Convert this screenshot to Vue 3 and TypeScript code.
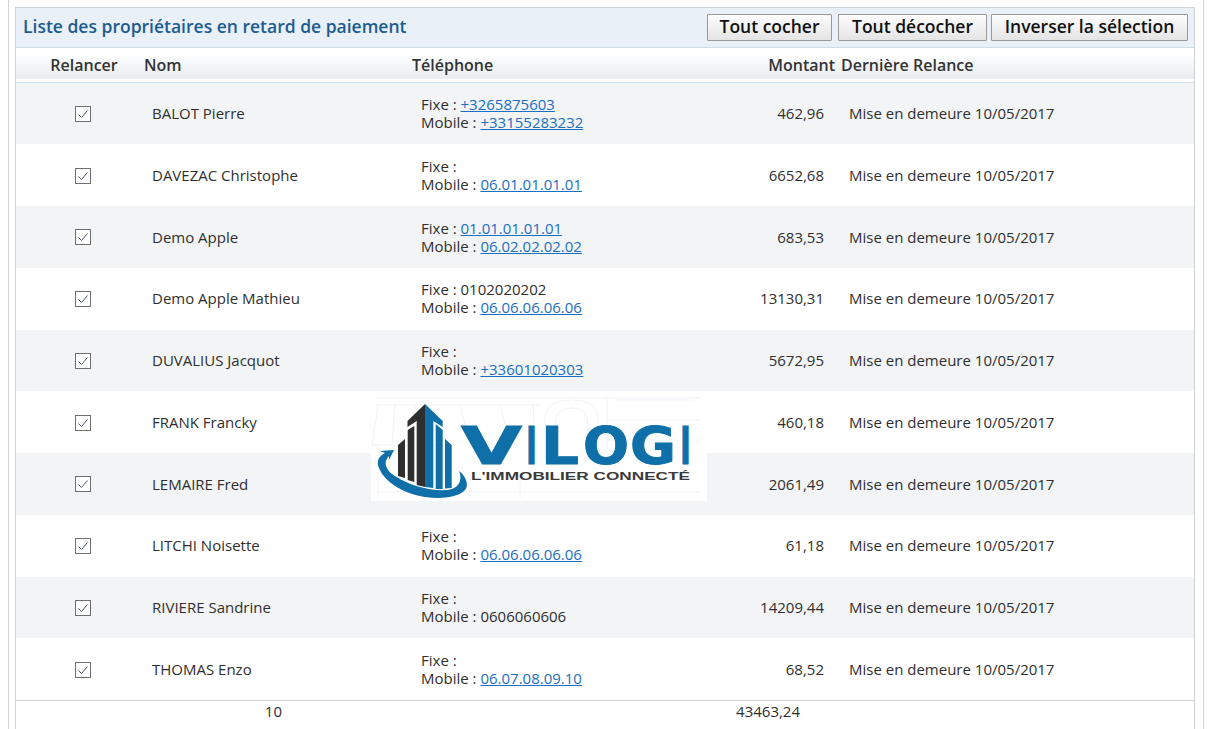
<script setup lang="ts">
interface Row {
  name: string
  fixe: string
  fixeLink: boolean
  mobile: string
  mobileLink: boolean
  amount: string
  covered?: boolean
}
const rows: Row[] = [
  { name: 'BALOT Pierre', fixe: '+3265875603', fixeLink: true, mobile: '+33155283232', mobileLink: true, amount: '462,96' },
  { name: 'DAVEZAC Christophe', fixe: '', fixeLink: false, mobile: '06.01.01.01.01', mobileLink: true, amount: '6652,68' },
  { name: 'Demo Apple', fixe: '01.01.01.01.01', fixeLink: true, mobile: '06.02.02.02.02', mobileLink: true, amount: '683,53' },
  { name: 'Demo Apple Mathieu', fixe: '0102020202', fixeLink: false, mobile: '06.06.06.06.06', mobileLink: true, amount: '13130,31' },
  { name: 'DUVALIUS Jacquot', fixe: '', fixeLink: false, mobile: '+33601020303', mobileLink: true, amount: '5672,95' },
  { name: 'FRANK Francky', fixe: '', fixeLink: false, mobile: '', mobileLink: false, amount: '460,18', covered: true },
  { name: 'LEMAIRE Fred', fixe: '', fixeLink: false, mobile: '', mobileLink: false, amount: '2061,49', covered: true },
  { name: 'LITCHI Noisette', fixe: '', fixeLink: false, mobile: '06.06.06.06.06', mobileLink: true, amount: '61,18' },
  { name: 'RIVIERE Sandrine', fixe: '', fixeLink: false, mobile: '0606060606', mobileLink: false, amount: '14209,44' },
  { name: 'THOMAS Enzo', fixe: '', fixeLink: false, mobile: '06.07.08.09.10', mobileLink: true, amount: '68,52' },
]
const logoLetters = [
  { ch: 'V', x: 461, w: 61 },
  { ch: 'I', x: 526, w: 11 },
  { ch: 'L', x: 541, w: 38 },
  { ch: 'O', x: 583, w: 46 },
  { ch: 'G', x: 630, w: 46 },
  { ch: 'I', x: 680, w: 11 },
]
</script>

<template>
  <div class="page">
    <div class="panel">
      <div class="titlebar">
        <h1 class="title">Liste des propriétaires en retard de paiement</h1>
        <div class="actions">
          <button class="btn btn-a" type="button">Tout cocher</button>
          <button class="btn btn-b" type="button">Tout décocher</button>
          <button class="btn btn-c" type="button">Inverser la sélection</button>
        </div>
      </div>

      <div class="head">
        <span class="h-check">Relancer</span>
        <span class="h-name">Nom</span>
        <span class="h-phone">Téléphone</span>
        <span class="h-amount">Montant</span>
        <span class="h-last">Dernière Relance</span>
      </div>

      <div class="body">
        <div v-for="(r, i) in rows" :key="r.name" class="row" :class="{ odd: i % 2 === 0 }">
          <span class="c-check">
            <svg width="16" height="16" viewBox="0 0 16 16">
              <rect x="0.5" y="0.5" width="15" height="15" fill="#fff" stroke="#6e6e6e" />
              <path d="M3.5 8.5 L6.5 11.5 L12.5 4.5" fill="none" stroke="#4a5a70" stroke-width="1" />
            </svg>
          </span>
          <span class="c-name">{{ r.name }}</span>
          <span class="c-phone">
            <template v-if="!r.covered">
              <span class="line">Fixe : <a v-if="r.fixeLink" href="#">{{ r.fixe }}</a><template v-else>{{ r.fixe }}</template></span>
              <span class="line">Mobile : <a v-if="r.mobileLink" href="#">{{ r.mobile }}</a><template v-else>{{ r.mobile }}</template></span>
            </template>
          </span>
          <span class="c-amount">{{ r.amount }}</span>
          <span class="c-last">Mise en demeure 10/05/2017</span>
        </div>
      </div>

      <div class="foot">
        <span class="f-count">10</span>
        <span class="f-total">43463,24</span>
      </div>

      <svg class="logo" viewBox="371 392 336 109" width="336" height="109">
        <rect x="371" y="392" width="336" height="109" fill="#fff" />
        <g fill="none" stroke="#eff2f7" stroke-width="1">
          <path d="M376 398 H700 M376 405 H540 M378 405 L372 445 M395 405 L392 445 M415 405 L412 445 M460 405 L470 445 M500 405 L510 445 M533 405 L535 445 M372 445 H440 M378 445 V498 M470 475 V498 M520 475 V498" />
          <path d="M545 460 V420 Q545 400 572 400 Q598 400 598 420 V460 M555 460 V425 Q555 408 572 408 Q588 408 588 425 V460 M607 398 V460 M607 420 H700 M607 440 H700 M615 400 H695" />
          <path d="M375 492 H700" />
        </g>
        <path fill="#2f2f2f" d="M425 404 L407.5 421 L407.5 427 L416.7 421 L416.7 485 L425 487 Z" />
        <path fill="#2f2f2f" d="M407.7 430 L414.3 426 L414.3 482 L407.7 480 Z" />
        <path fill="#2f2f2f" d="M398 445 L405 439 L405 478 L398 476 Z" />
        <path fill="#0f6fa8" d="M425 404 L442.7 421 L442.7 427 L433.3 421 L433.3 488 L425 487 Z" />
        <path fill="#0f6fa8" d="M435.7 424 L442.7 430 L442.7 489 L435.7 489 Z" />
        <path fill="#0f6fa8" d="M445 439 L451.7 445 L451.7 488 L445 488.5 Z" />
        <path fill="#0f6fa8" d="M380 451 L394 450 L389 460 L389 456 C383 462 385 470 395 476 C410 486 430 491 447 490 C458 489 463 481 459 471 C466 476 470 486 464 491 C456 498 440 499 425 497 C405 494 385 483 379 468 C376 461 379 456 385 453 Z" />
        <text
          v-for="l in logoLetters"
          :key="l.x"
          :x="l.x"
          y="464"
          class="logo-main"
          :textLength="l.w"
          lengthAdjust="spacingAndGlyphs"
        >{{ l.ch }}</text>
        <text x="471" y="480" class="logo-sub" textLength="219" lengthAdjust="spacingAndGlyphs">L'IMMOBILIER CONNECTÉ</text>
      </svg>
    </div>
  </div>
</template>

<style>
html, body { margin: 0; height: 729px; overflow: hidden; background: #fff; }
</style>

<style scoped>
.page {
  box-sizing: border-box;
  width: 1196px;
  height: 729px;
  margin-left: 8px;
  padding: 7px 8px 0 6px;
  border-left: 1px solid #d4d4d4;
  border-right: 1px solid #d4d4d4;
  overflow: hidden;
  font-family: "Open Sans", "Liberation Sans", sans-serif;
  font-size: 15px;
  color: #2f2f2f;
}
.panel {
  position: relative;
  box-sizing: border-box;
  width: 1180px;
  height: 722px;
  border: 1px solid #ccd3d9;
  border-bottom: 0;
  background: #fff;
}
.titlebar {
  display: flex;
  align-items: center;
  justify-content: space-between;
  height: 39px;
  padding: 0 6px 0 7px;
  background: #e9f0f8;
  border-bottom: 1px solid #cfdde8;
}
.title {
  margin: -3px 0 0;
  font-size: 17.5px;
  font-weight: 600;
  color: #1c5c8e;
}
.actions { display: flex; gap: 6px; }
.btn {
  box-sizing: border-box;
  height: 27px;
  padding: 0 0 3px;
  border: 1px solid #9a9a9a;
  border-radius: 1px;
  background: linear-gradient(#fdfdfd, #e4e4e4);
  font-family: inherit;
  font-size: 17.5px;
  font-weight: 600;
  line-height: 22px;
  color: #111;
}
.btn-a { width: 125px; }
.btn-b { width: 149px; margin-right: -2px; }
.btn-c { width: 197px; }

.head {
  position: relative;
  height: 28px;
  padding-top: 3px;
  display: flex;
  align-items: center;
  background: linear-gradient(#fff 20%, #e8ebef);
  font-weight: 600;
  font-size: 16px;
  color: #333;
  border-bottom: 3px solid #fff;
  box-shadow: 0 1px 0 #cfe0ec;
  margin-bottom: 0.5px;
  white-space: nowrap;
}
.h-check { width: 128px; text-align: center; box-sizing: border-box; padding-left: 8px; }
.h-name { width: 268px; }
.h-phone { width: 324px; }
.h-amount { width: 99px; text-align: right; box-sizing: border-box; }
.h-last { margin-left: 6px; }

.row {
  box-sizing: border-box;
  height: 61.75px;
  padding-bottom: 0.5px;
  display: flex;
  align-items: center;
  background: #fff;
}
.row.odd { background: #f2f4f6; }
.c-check { width: 136px; display: flex; justify-content: center; box-sizing: border-box; padding-right: 2px; padding-top: 1.5px; }
.c-check svg { display: block; }
.c-name { width: 269px; white-space: nowrap; }
.c-phone { width: 292px; display: flex; flex-direction: column; line-height: 18px; }
.line { display: block; white-space: nowrap; }
.line a { color: #1b6ec2; text-decoration: underline; }
.c-amount { width: 111px; text-align: right; box-sizing: border-box; }
.c-last { margin-left: 25px; white-space: nowrap; }

.foot {
  height: 20px;
  display: flex;
  align-items: center;
  border-top: 1px solid #d0d0d0;
}
.f-count { width: 266px; text-align: right; }
.f-total { width: 518px; text-align: right; }

.logo {
  position: absolute;
  left: 355px;
  top: 384px;
  display: block;
}
.logo-main {
  font-family: "DejaVu Sans", "Liberation Sans", sans-serif;
  font-weight: 700;
  font-size: 52px;
  fill: #0f6fa8;
  stroke: #0f6fa8;
  stroke-width: 1px;
}
.logo-sub {
  font-family: "Liberation Sans", sans-serif;
  font-weight: 700;
  font-size: 10.5px;
  fill: #3a3a3a;
}
</style>
